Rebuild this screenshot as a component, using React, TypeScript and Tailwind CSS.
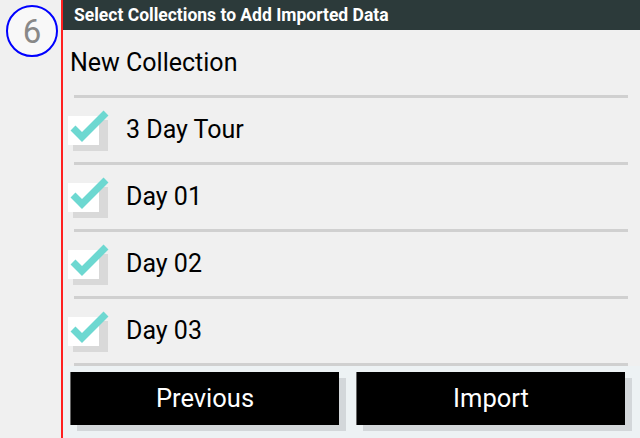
import React from 'react';

const items = ['3 Day Tour', 'Day 01', 'Day 02', 'Day 03'];

const CheckBox: React.FC = () => (
  <svg width="50" height="50" viewBox="0 0 50 50" className="shrink-0">
    {/* shadow */}
    <rect x="9" y="15" width="35" height="31" fill="#d9d9d9" />
    <rect x="4" y="11" width="31" height="29" fill="#ffffff" />
    <path d="M9 23 L18 32 L42 8" fill="none" stroke="#6dd8d1" strokeWidth="7" strokeLinejoin="miter" />
  </svg>
);

const Divider: React.FC = () => <div className="ml-[11px] h-[3px] w-[554px] bg-[#d0d0d0]" />;

export default function App() {
  return (
    <div
      className="flex h-[438px] w-[640px] overflow-hidden bg-[#f0f0f0]"
      style={{ fontFamily: 'Roboto, "Liberation Sans", sans-serif' }}
    >
      {/* side column */}
      <div className="w-[61px] shrink-0 pl-[6px] pt-[5px]">
        <div className="flex h-[52px] w-[52px] items-center justify-center rounded-full border-[2.5px] border-[#0000ff] bg-[#f8f8f8]">
          <span className="text-[33px] leading-none text-[#888888]">6</span>
        </div>
      </div>

      <div className="flex w-[579px] flex-col border-l-2 border-[#ff2020]">
        <div className="flex h-[30px] items-center bg-[#2c3a3a] pl-[11px] text-[17.5px] font-bold text-white">
          Select Collections to Add Imported Data
        </div>

        <div className="flex h-[65px] items-center pl-[7px] text-[25px] text-black">New Collection</div>
        <Divider />

        {items.map((label) => (
          <React.Fragment key={label}>
            <div className="flex h-[64px] items-center pl-[1px]">
              <CheckBox />
              <span className="ml-[12px] text-[25px] text-black">{label}</span>
            </div>
            <Divider />
          </React.Fragment>
        ))}

        <div className="flex flex-1 gap-[17px] bg-[#edf2f4] pl-[7px] pt-[6px]">
          <button className="flex h-[53px] w-[269px] items-center justify-center border-l border-[#666666] bg-black text-[25.5px] text-white shadow-[7px_6px_0_#d3d7da]">
            Previous
          </button>
          <button className="flex h-[53px] w-[269px] items-center justify-center border-l border-[#666666] bg-black text-[25.5px] text-white shadow-[7px_6px_0_#d3d7da]">
            Import
          </button>
        </div>
      </div>
    </div>
  );
}
